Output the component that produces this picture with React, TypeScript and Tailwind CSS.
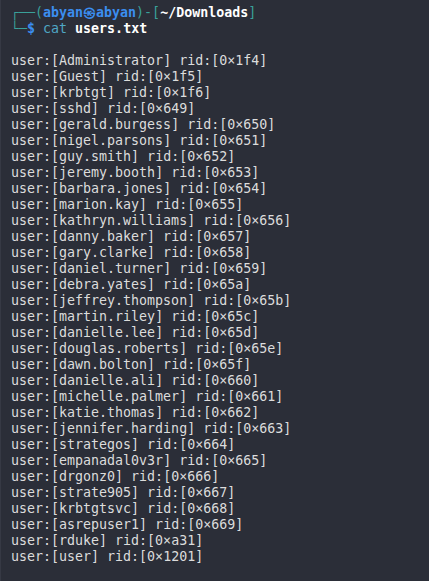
import React from 'react';

const USERS: [string, string][] = [
  ['Administrator', '1f4'],
  ['Guest', '1f5'],
  ['krbtgt', '1f6'],
  ['sshd', '649'],
  ['gerald.burgess', '650'],
  ['nigel.parsons', '651'],
  ['guy.smith', '652'],
  ['jeremy.booth', '653'],
  ['barbara.jones', '654'],
  ['marion.kay', '655'],
  ['kathryn.williams', '656'],
  ['danny.baker', '657'],
  ['gary.clarke', '658'],
  ['daniel.turner', '659'],
  ['debra.yates', '65a'],
  ['jeffrey.thompson', '65b'],
  ['martin.riley', '65c'],
  ['danielle.lee', '65d'],
  ['douglas.roberts', '65e'],
  ['dawn.bolton', '65f'],
  ['danielle.ali', '660'],
  ['michelle.palmer', '661'],
  ['katie.thomas', '662'],
  ['jennifer.harding', '663'],
  ['strategos', '664'],
  ['empanadal0v3r', '665'],
  ['drgonz0', '666'],
  ['strate905', '667'],
  ['krbtgtsvc', '668'],
  ['asrepuser1', '669'],
  ['rduke', 'a31'],
  ['user', '1201'],
];

export default function App() {
  return (
    <div className="w-[429px] h-[581px] bg-[#2b2e38] border-l border-[#363944] pl-[10px] pt-[5px] overflow-hidden font-['DejaVu_Sans_Mono',monospace] text-[13.3px] leading-[16px] text-[#dcdcdc] whitespace-pre">
      {/* prompt */}
      <div>
        <span className="text-[#3aa09a]">┌──(</span>
        <span className="text-[#3b8ef0] font-bold">abyan㉿abyan</span>
        <span className="text-[#3aa09a]">)-[</span>
        <span className="text-white font-bold">~/Downloads</span>
        <span className="text-[#3aa09a]">]</span>
      </div>
      <div>
        <span className="text-[#3aa09a]">└─</span>
        <span className="text-[#3b8ef0] font-bold">$</span>
        <span> </span>
        <span className="text-[#4fa6c4]">cat</span>
        <span> </span>
        <span className="text-white font-bold">users.txt</span>
      </div>
      <div>&nbsp;</div>

      {/* output */}
      {USERS.map(([name, rid]) => (
        <div key={name}>
          user:[{name}] rid:[0×{rid}]
        </div>
      ))}
    </div>
  );
}
